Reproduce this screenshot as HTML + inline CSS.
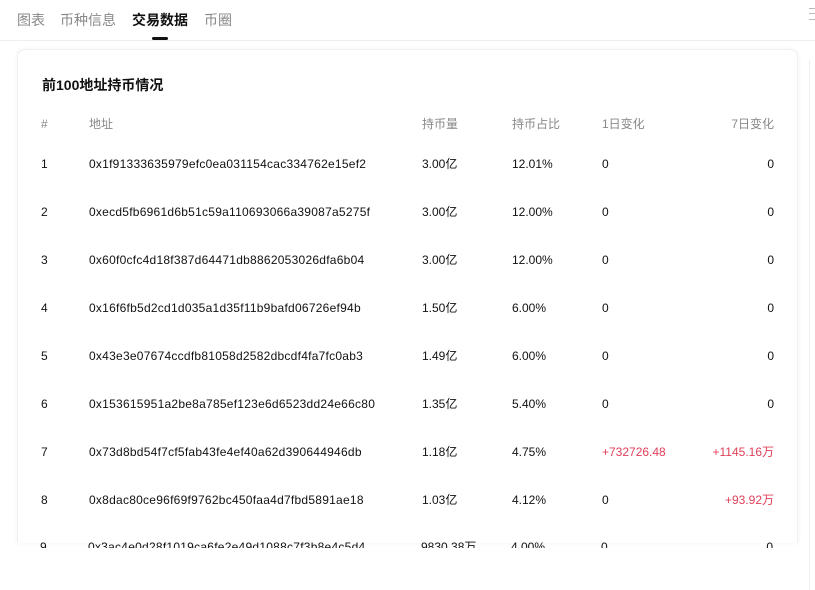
<!DOCTYPE html>
<html><head><meta charset="utf-8"><style>
*{margin:0;padding:0;box-sizing:border-box}
body{width:815px;height:590px;background:#fff;font-family:"Liberation Sans","Noto Sans CJK SC",sans-serif;position:relative;overflow:hidden;color:#111}
.tabs{position:absolute;top:10px;left:17px;font-size:14px;color:#888}
.tabs span{position:absolute;white-space:nowrap}
.ul{position:absolute;left:152px;top:37px;width:16px;height:3px;background:#111;border-radius:2px}
.hr{position:absolute;top:40px;left:0;width:815px;height:1px;background:#eee}
.menu{position:absolute;right:0;top:8px;width:6px;height:12px;border-top:1px solid #bbb;border-bottom:1px solid #bbb}
.menu:after{content:"";position:absolute;top:4px;left:0;width:6px;height:1px;background:#bbb}
.card{position:absolute;left:17px;top:49px;width:781px;height:494px;border:1px solid #f0f0f0;border-bottom:none;border-radius:8px 8px 0 0;box-shadow:0 0 6px rgba(0,0,0,.05);overflow:hidden;background:#fff}
.title{position:absolute;left:24px;top:25px;font-size:14px;font-weight:bold}
.r{position:absolute;left:0;width:781px;height:20px;font-size:12px;line-height:20px}
.r span{position:absolute;white-space:nowrap}
.h{color:#888;font-size:12px}
.c1{left:23px}.c2{left:71px;letter-spacing:0.25px}.c3{left:404px}.c4{left:494px}.c5{left:584px}.c6{right:25px}
.red{color:#e0405a}
.vr{position:absolute;left:809px;top:60px;width:1px;height:530px;background:#eee}
.clip{position:absolute;left:17px;top:540px;width:781px;height:8px;overflow:hidden}
</style></head><body>
<div class="tabs">
<span style="left:0">图表</span><span style="left:43px">币种信息</span><span style="left:115px;color:#111;font-weight:bold">交易数据</span><span style="left:187px">币圈</span>
</div>
<div class="ul"></div>
<div class="hr"></div>
<div class="menu"></div>
<div class="vr"></div>
<div class="card">
<div class="title">前100地址持币情况</div>
<div class="r h" style="top:64px"><span class="c1">#</span><span class="c2" style="letter-spacing:0">地址</span><span class="c3">持币量</span><span class="c4">持币占比</span><span class="c5">1日变化</span><span class="c6">7日变化</span></div>
<div class="r" style="top:104px"><span class="c1">1</span><span class="c2">0x1f91333635979efc0ea031154cac334762e15ef2</span><span class="c3">3.00亿</span><span class="c4">12.01%</span><span class="c5">0</span><span class="c6">0</span></div>
<div class="r" style="top:152px"><span class="c1">2</span><span class="c2">0xecd5fb6961d6b51c59a110693066a39087a5275f</span><span class="c3">3.00亿</span><span class="c4">12.00%</span><span class="c5">0</span><span class="c6">0</span></div>
<div class="r" style="top:200px"><span class="c1">3</span><span class="c2">0x60f0cfc4d18f387d64471db8862053026dfa6b04</span><span class="c3">3.00亿</span><span class="c4">12.00%</span><span class="c5">0</span><span class="c6">0</span></div>
<div class="r" style="top:248px"><span class="c1">4</span><span class="c2">0x16f6fb5d2cd1d035a1d35f11b9bafd06726ef94b</span><span class="c3">1.50亿</span><span class="c4">6.00%</span><span class="c5">0</span><span class="c6">0</span></div>
<div class="r" style="top:296px"><span class="c1">5</span><span class="c2">0x43e3e07674ccdfb81058d2582dbcdf4fa7fc0ab3</span><span class="c3">1.49亿</span><span class="c4">6.00%</span><span class="c5">0</span><span class="c6">0</span></div>
<div class="r" style="top:344px"><span class="c1">6</span><span class="c2">0x153615951a2be8a785ef123e6d6523dd24e66c80</span><span class="c3">1.35亿</span><span class="c4">5.40%</span><span class="c5">0</span><span class="c6">0</span></div>
<div class="r" style="top:392px"><span class="c1">7</span><span class="c2">0x73d8bd54f7cf5fab43fe4ef40a62d390644946db</span><span class="c3">1.18亿</span><span class="c4">4.75%</span><span class="c5 red">+732726.48</span><span class="c6 red">+1145.16万</span></div>
<div class="r" style="top:440px"><span class="c1">8</span><span class="c2">0x8dac80ce96f69f9762bc450faa4d7fbd5891ae18</span><span class="c3">1.03亿</span><span class="c4">4.12%</span><span class="c5">0</span><span class="c6 red">+93.92万</span></div>
</div>
<div class="clip"><div class="r" style="top:-3px"><span class="c1">9</span><span class="c2">0x3ac4e0d28f1019ca6fe2e49d1088c7f3b8e4c5d4</span><span class="c3">9830.38万</span><span class="c4">4.00%</span><span class="c5">0</span><span class="c6">0</span></div></div>
</body></html>
